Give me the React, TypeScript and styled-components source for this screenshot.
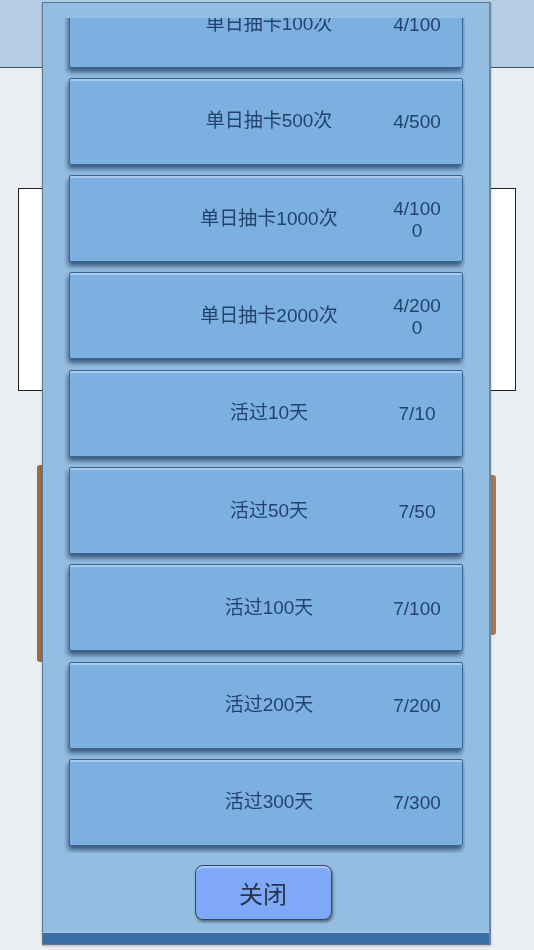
import React, { useLayoutEffect, useRef } from "react";
import styled, { createGlobalStyle } from "styled-components";

const Global = createGlobalStyle`
  html, body { margin: 0; padding: 0; }
  body {
    background: #eaeef2;
    font-family: "Liberation Sans", "Noto Sans CJK SC", sans-serif;
    width: 534px;
    height: 950px;
    overflow: hidden;
  }
`;

const Page = styled.div`
  width: 534px;
  height: 950px;
  display: flex;
  flex-direction: column;
`;

const Header = styled.div`
  height: 67px;
  background: #b4cde2;
  border-bottom: 1px solid #44525f;
  flex-shrink: 0;
`;

const InfoBox = styled.div`
  margin: 120px 18px 0 18px;
  height: 201px;
  background: #ffffff;
  border: 1.5px solid #222222;
`;

const CardRow = styled.div`
  margin: 74px 38px 0 37px;
  display: flex;
  align-items: flex-start;
  justify-content: space-between;
`;

const BrownCard = styled.div<{ $h: number; $top: number }>`
  width: 200px;
  height: ${(p) => p.$h}px;
  margin-top: ${(p) => p.$top}px;
  border-radius: 3px;
  background: linear-gradient(90deg, #9a6c40, #c49464 40%, #a7784a);
`;

const Overlay = styled.div`
  position: fixed;
  left: 42px;
  top: 2px;
  width: 449px;
  height: 943px;
  box-sizing: border-box;
  background: #94bde2;
  border: 1px solid #5d7894;
  border-right: 2px solid #6d87a2;
  display: flex;
  flex-direction: column;
  box-shadow: 0 1px 2px rgba(0, 0, 0, 0.25);
`;

const ScrollList = styled.div`
  margin: 15px 24px 0 20px;
  height: 835px;
  overflow: hidden;
  display: flex;
  flex-direction: column;
  gap: 10.3px;
  padding: 8px 2px 12px 6px;
  box-sizing: border-box;
`;

const Item = styled.div`
  flex-shrink: 0;
  height: 87px;
  box-sizing: border-box;
  background: #7cb0e1;
  border: 1px solid #3b6590;
  border-radius: 2px;
  box-shadow: inset 0 2px 0 rgba(255, 255, 255, 0.35), -1px 4px 5px rgba(20, 45, 80, 0.7);
  display: grid;
  grid-template-columns: 1fr 50px;
  align-items: center;
  padding: 0 20px 0 76px;
  color: #23436a;
  font-size: 19px;
  line-height: 22px;
`;

const Label = styled.div`
  text-align: center;
  white-space: nowrap;
`;

const Value = styled.div`
  text-align: center;
  word-break: break-all;
  padding-top: 2px;
`;

const Footer = styled.div`
  flex: 1;
  display: flex;
  align-items: center;
  justify-content: center;
  padding-right: 6px;
`;

const CloseButton = styled.button`
  width: 137px;
  height: 55px;
  border-radius: 8px;
  border: 1.5px solid #34495f;
  background: #7fa9f8;
  box-shadow: inset 0 2px 0 rgba(255, 255, 255, 0.35), 1px 2px 3px rgba(0, 0, 0, 0.45);
  font-family: "Noto Sans CJK SC", sans-serif;
  font-size: 24px;
  color: #27324c;
  cursor: pointer;
  padding: 0;
`;

const BottomBand = styled.div`
  height: 11px;
  flex-shrink: 0;
  background: #3a6ea6;
  border-top: 1px solid #a8c8e6;
`;

const items: [string, string][] = [
  ["单日抽卡10次", "4/10"],
  ["单日抽卡50次", "4/50"],
  ["单日抽卡100次", "4/100"],
  ["单日抽卡500次", "4/500"],
  ["单日抽卡1000次", "4/1000"],
  ["单日抽卡2000次", "4/2000"],
  ["活过10天", "7/10"],
  ["活过50天", "7/50"],
  ["活过100天", "7/100"],
  ["活过200天", "7/200"],
  ["活过300天", "7/300"],
];

export default function App() {
  const listRef = useRef<HTMLDivElement>(null);
  useLayoutEffect(() => {
    if (listRef.current) listRef.current.scrollTop = 240;
  }, []);
  return (
    <>
      <Global />
      <Page>
        <Header />
        <InfoBox />
        <CardRow>
          <BrownCard $h={197} $top={0} />
          <BrownCard $h={160} $top={10} />
        </CardRow>
      </Page>
      <Overlay>
        <ScrollList ref={listRef}>
          {items.map(([label, value]) => (
            <Item key={label}>
              <Label>{label}</Label>
              <Value>{value}</Value>
            </Item>
          ))}
        </ScrollList>
        <Footer>
          <CloseButton>关闭</CloseButton>
        </Footer>
        <BottomBand />
      </Overlay>
    </>
  );
}
